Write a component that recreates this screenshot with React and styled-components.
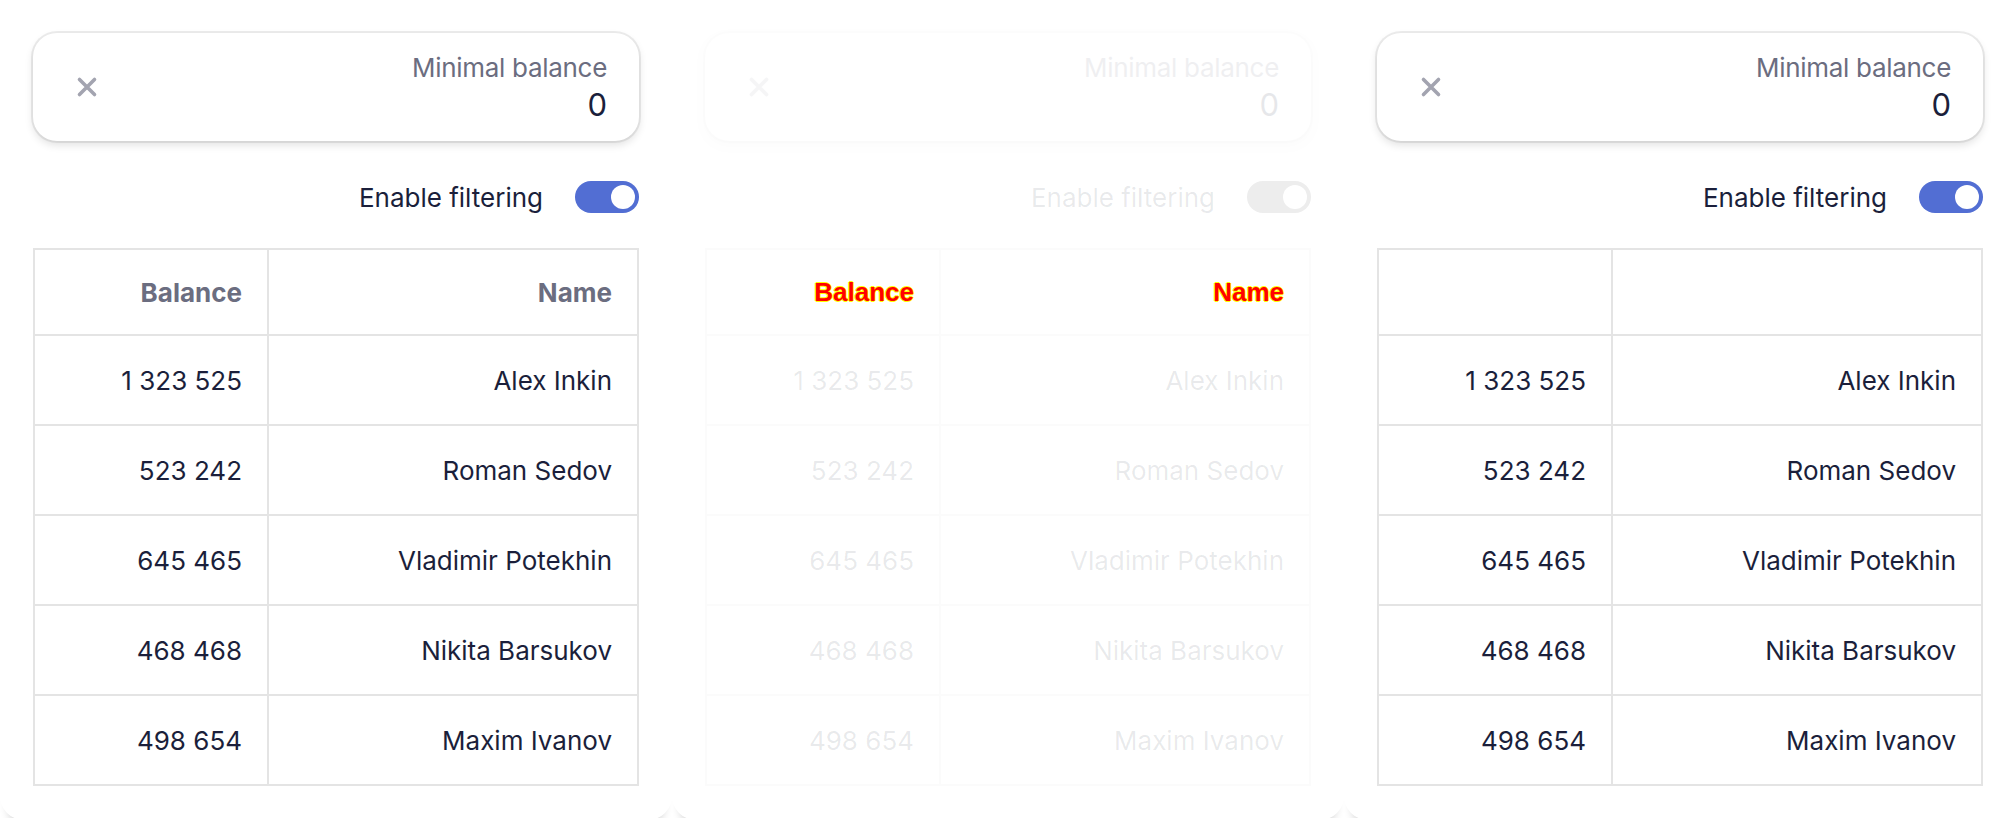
import React from 'react';
import styled, { createGlobalStyle } from 'styled-components';

const GlobalStyle = createGlobalStyle`
  html, body {
    margin: 0;
    background: #fff;
    overflow: hidden;
  }
  body {
    font-family: Inter, "Noto Sans", sans-serif;
    color: #1b1f3b;
  }
`;

const Page = styled.div`
  display: flex;
  width: 2016px;
  height: 818px;
  overflow: hidden;
`;

const Card = styled.div`
  flex: 0 0 ${(p) => p.$width}px;
  height: 820px;
  box-sizing: border-box;
  padding: 33px 0 0 33px;
  background: #fff;
  border-radius: 0 0 24px 24px;
  box-shadow: 0 12px 8px -8px rgba(0, 0, 0, 0.18);
`;

const Column = styled.div`
  width: 606px;
  display: flex;
  flex-direction: column;
`;

const Field = styled.div`
  height: 108px;
  box-sizing: border-box;
  display: flex;
  align-items: center;
  padding: 0 32px 0 43px;
  border-radius: 24px;
  background: #fff;
  box-shadow: 0 0 0 2px rgba(0, 0, 0, 0.07), 0 4px 8px rgba(0, 0, 0, 0.12);
  opacity: ${(p) => (p.$faded ? 0.1 : 1)};
`;

const FieldText = styled.div`
  margin-left: auto;
  display: flex;
  flex-direction: column;
  align-items: flex-end;
`;

const Label = styled.span`
  font-size: 26px;
  line-height: 36px;
  letter-spacing: -0.3px;
  color: #6b6d80;
`;

const Value = styled.span`
  font-size: 31px;
  line-height: 38px;
  color: #1b1f3b;
`;

const ToggleRow = styled.div`
  margin-top: 40px;
  height: 32px;
  display: flex;
  align-items: center;
  justify-content: flex-end;
  gap: 32px;
  font-size: 26px;
  color: ${(p) => (p.$faded ? 'rgba(27, 31, 59, 0.1)' : '#1b1f3b')};
`;

const Track = styled.div`
  width: 64px;
  height: 32px;
  box-sizing: border-box;
  padding: 4px;
  border-radius: 16px;
  display: flex;
  justify-content: flex-end;
  background: ${(p) => (p.$faded ? '#ededed' : '#526ed3')};
`;

const Knob = styled.div`
  width: 24px;
  height: 24px;
  border-radius: 50%;
  background: #fff;
`;

const Table = styled.table`
  margin-top: 35px;
  width: 606px;
  table-layout: fixed;
  border-collapse: separate;
  border-spacing: 0;
  border-top: 2px solid ${(p) => (p.$faded ? '#fbfbfb' : '#e4e4e4')};
  border-left: 2px solid ${(p) => (p.$faded ? '#fbfbfb' : '#e4e4e4')};
`;

const Cell = styled.td`
  box-sizing: border-box;
  height: ${(p) => (p.$head ? 86 : 90)}px;
  padding: 0 25px 0 0;
  text-align: right;
  vertical-align: middle;
  border-right: 2px solid ${(p) => (p.$faded ? '#fbfbfb' : '#e4e4e4')};
  border-bottom: 2px solid ${(p) => (p.$faded ? '#fbfbfb' : '#e4e4e4')};
  font-size: 26px;
  color: ${(p) => (p.$faded ? 'rgba(27, 31, 59, 0.1)' : '#1b1f3b')};
`;

const HeadCell = styled(Cell).attrs({ as: 'th' })`
  font-weight: 700;
  color: #6b6d80;
`;

const Marked = styled.span`
  font-family: "Liberation Sans", Arial, sans-serif;
  font-weight: 700;
  color: #ff0000;
  text-shadow: 1px 0 0 #ffff00, -1px 0 0 #ffff00, 0 1px 0 #ffff00, 0 -1px 0 #ffff00;
`;

const rows = [
  ['1\u00a0323\u00a0525', 'Alex Inkin'],
  ['523\u00a0242', 'Roman Sedov'],
  ['645\u00a0465', 'Vladimir Potekhin'],
  ['468\u00a0468', 'Nikita Barsukov'],
  ['498\u00a0654', 'Maxim Ivanov'],
];

const ClearIcon = () => (
  <svg width="22" height="22" viewBox="0 0 22 22">
    <path d="M3.5 3.5 L18.5 18.5 M18.5 3.5 L3.5 18.5" stroke="#a3a4b0" strokeWidth="3.6" strokeLinecap="round" />
  </svg>
);

const FilterCard = ({ width = 672, faded, header }) => (
  <Card $width={width}>
    <Column>
      <Field $faded={faded}>
        <ClearIcon />
        <FieldText>
          <Label>Minimal balance</Label>
          <Value>0</Value>
        </FieldText>
      </Field>
      <ToggleRow $faded={faded}>
        Enable filtering
        <Track $faded={faded}>
          <Knob />
        </Track>
      </ToggleRow>
      <Table $faded={faded}>
        <thead>
          <tr>
            <HeadCell $head $faded={faded} style={{ width: 234 }}>
              {header === 'marked' ? <Marked>Balance</Marked> : header === 'plain' ? 'Balance' : null}
            </HeadCell>
            <HeadCell $head $faded={faded}>
              {header === 'marked' ? <Marked>Name</Marked> : header === 'plain' ? 'Name' : null}
            </HeadCell>
          </tr>
        </thead>
        <tbody>
          {rows.map(([balance, name]) => (
            <tr key={name}>
              <Cell $faded={faded}>{balance}</Cell>
              <Cell $faded={faded}>{name}</Cell>
            </tr>
          ))}
        </tbody>
      </Table>
    </Column>
  </Card>
);

export default function App() {
  return (
    <>
      <GlobalStyle />
      <Page>
        <FilterCard header="plain" />
        <FilterCard header="marked" faded />
        <FilterCard header="none" width={700} />
      </Page>
    </>
  );
}
